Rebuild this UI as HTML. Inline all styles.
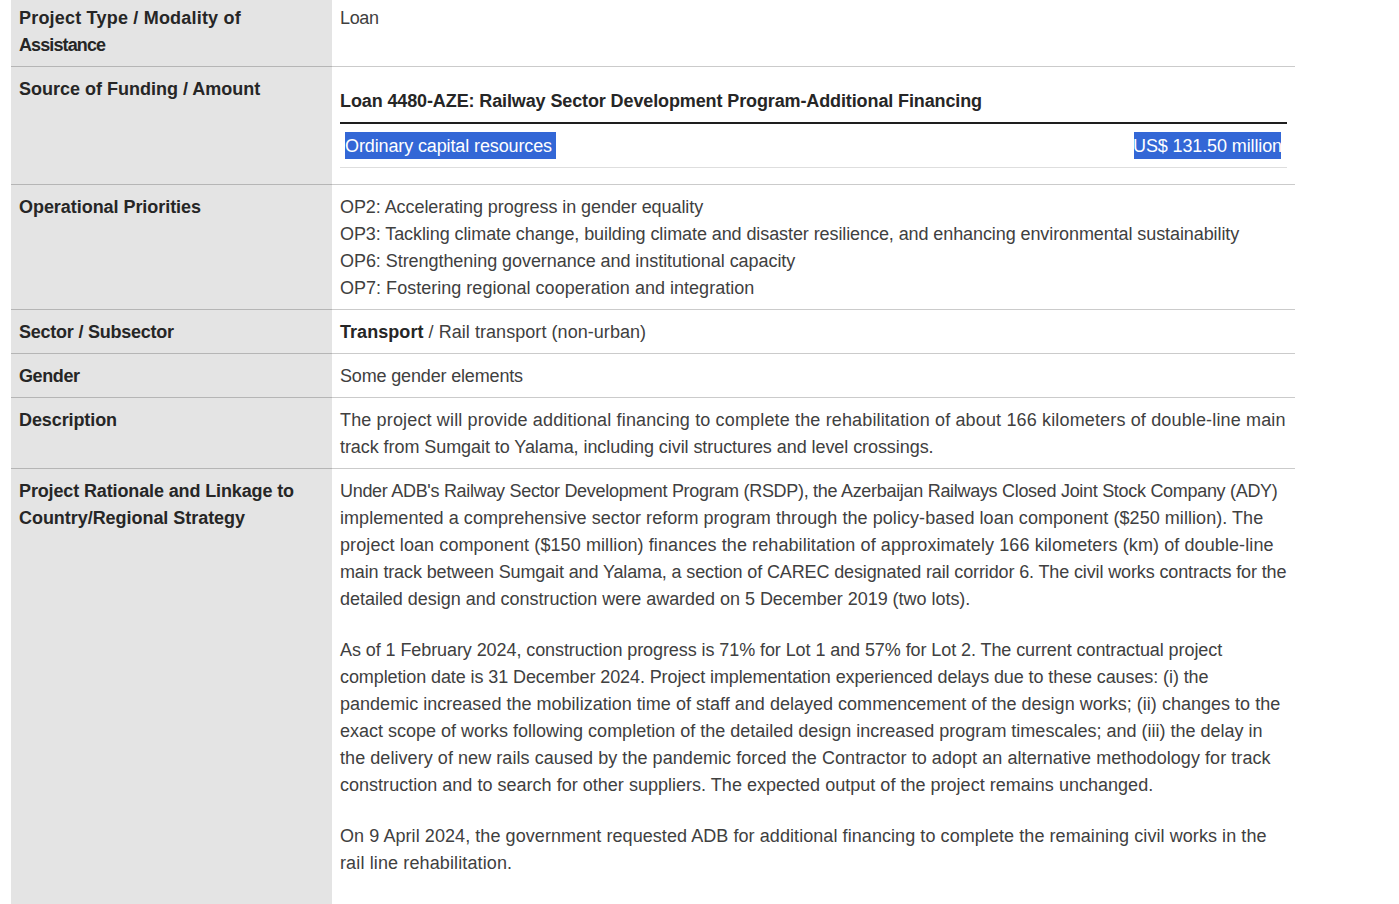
<!DOCTYPE html>
<html>
<head>
<meta charset="utf-8">
<style>
html,body{margin:0;padding:0;background:#fff;overflow:hidden;}
body{width:1399px;height:904px;position:relative;font-family:"Liberation Sans",sans-serif;font-size:18px;line-height:27px;color:#404040;}
#wrap{position:absolute;left:11px;top:-4px;width:1284px;}
table.main{border-collapse:collapse;width:1284px;table-layout:fixed;}
table.main>tbody>tr>th{width:305px;background:#e4e4e4;text-align:left;vertical-align:top;padding:8px;font-weight:bold;border-bottom:1px solid #b5b5b5;color:#262626;}
table.main>tbody>tr>td{vertical-align:top;padding:8px;border-bottom:1px solid #cbcbcb;}
.l{white-space:nowrap;display:block;position:relative;top:1px;}
.sub{width:947px;border-collapse:collapse;margin:4px 0 8px 0;}
.sub th{background:none;border-bottom:2px solid #1e1e1e;padding:8px 0 8px 0;font-weight:bold;text-align:left;color:#262626;}
.sub td{border-bottom:1px solid #dedede;padding:8px 6px 8px 5px;}
.sel{background:#3367d6;color:#fff;display:inline-block;height:27px;vertical-align:top;white-space:nowrap;box-sizing:border-box;padding-top:1px;overflow:hidden;}
p{margin:0 0 24px 0;}
p.last{margin:0;}
b{color:#262626;}
</style>
</head>
<body>
<div id="wrap">
<table class="main">
<tr><th><span class="l" style="letter-spacing:0.200px">Project Type / Modality of</span><span class="l" style="letter-spacing:-0.889px">Assistance</span></th><td><span class="l" style="letter-spacing:-0.333px">Loan</span></td></tr>
<tr><th><span class="l" style="letter-spacing:0.000px">Source of Funding / Amount</span></th><td>
<table class="sub">
<tr><th colspan="2"><span class="l" style="letter-spacing:-0.116px">Loan 4480-AZE: Railway Sector Development Program-Additional Financing</span></th></tr>
<tr><td><span class="sel" style="width:211px;letter-spacing:-0.12px">Ordinary capital resources</span></td><td style="text-align:right"><span class="sel" style="width:147px;letter-spacing:-0.12px;text-align:left;text-indent:-1px">US$ 131.50 million</span></td></tr>
</table>
</td></tr>
<tr><th><span class="l" style="letter-spacing:-0.048px">Operational Priorities</span></th><td>
<span class="l" style="letter-spacing:-0.068px">OP2: Accelerating progress in gender equality</span>
<span class="l" style="letter-spacing:-0.088px">OP3: Tackling climate change, building climate and disaster resilience, and enhancing environmental sustainability</span>
<span class="l" style="letter-spacing:-0.055px">OP6: Strengthening governance and institutional capacity</span>
<span class="l" style="letter-spacing:0.020px">OP7: Fostering regional cooperation and integration</span>
</td></tr>
<tr><th><span class="l" style="letter-spacing:-0.235px">Sector / Subsector</span></th><td><span class="l" style="letter-spacing:0.054px"><b>Transport</b> / Rail transport (non-urban)</span></td></tr>
<tr><th><span class="l" style="letter-spacing:-0.400px">Gender</span></th><td><span class="l" style="letter-spacing:-0.158px">Some gender elements</span></td></tr>
<tr><th><span class="l" style="letter-spacing:-0.100px">Description</span></th><td>
<span class="l" style="letter-spacing:0.151px">The project will provide additional financing to complete the rehabilitation of about 166 kilometers of double-line main</span>
<span class="l" style="letter-spacing:-0.066px">track from Sumgait to Yalama, including civil structures and level crossings.</span>
</td></tr>
<tr><th style="height:600px"><span class="l" style="letter-spacing:-0.129px">Project Rationale and Linkage to</span><span class="l" style="letter-spacing:-0.042px">Country/Regional Strategy</span></th><td>
<p>
<span class="l" style="letter-spacing:-0.300px">Under ADB's Railway Sector Development Program (RSDP), the Azerbaijan Railways Closed Joint Stock Company (ADY)</span>
<span class="l" style="letter-spacing:0.056px">implemented a comprehensive sector reform program through the policy-based loan component ($250 million). The</span>
<span class="l" style="letter-spacing:0.095px">project loan component ($150 million) finances the rehabilitation of approximately 166 kilometers (km) of double-line</span>
<span class="l" style="letter-spacing:-0.127px">main track between Sumgait and Yalama, a section of CAREC designated rail corridor 6. The civil works contracts for the</span>
<span class="l" style="letter-spacing:-0.027px">detailed design and construction were awarded on 5 December 2019 (two lots).</span>
</p>
<p>
<span class="l" style="letter-spacing:-0.081px">As of 1 February 2024, construction progress is 71% for Lot 1 and 57% for Lot 2. The current contractual project</span>
<span class="l" style="letter-spacing:-0.094px">completion date is 31 December 2024. Project implementation experienced delays due to these causes: (i) the</span>
<span class="l" style="letter-spacing:0.018px">pandemic increased the mobilization time of staff and delayed commencement of the design works; (ii) changes to the</span>
<span class="l" style="letter-spacing:0.000px">exact scope of works following completion of the detailed design increased program timescales; and (iii) the delay in</span>
<span class="l" style="letter-spacing:0.061px">the delivery of new rails caused by the pandemic forced the Contractor to adopt an alternative methodology for track</span>
<span class="l" style="letter-spacing:0.020px">construction and to search for other suppliers. The expected output of the project remains unchanged.</span>
</p>
<p class="last">
<span class="l" style="letter-spacing:0.070px">On 9 April 2024, the government requested ADB for additional financing to complete the remaining civil works in the</span>
<span class="l" style="letter-spacing:0.125px">rail line rehabilitation.</span>
</p>
</td></tr>
</table>
</div>
</body>
</html>
